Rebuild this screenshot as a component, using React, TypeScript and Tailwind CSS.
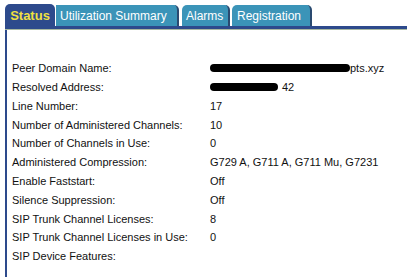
const rows: [string, string][] = [
  ["Peer Domain Name:", "domain"],
  ["Resolved Address:", "address"],
  ["Line Number:", "17"],
  ["Number of Administered Channels:", "10"],
  ["Number of Channels in Use:", "0"],
  ["Administered Compression:", "G729 A, G711 A, G711 Mu, G7231"],
  ["Enable Faststart:", "Off"],
  ["Silence Suppression:", "Off"],
  ["SIP Trunk Channel Licenses:", "8"],
  ["SIP Trunk Channel Licenses in Use:", "0"],
  ["SIP Device Features:", ""],
];

function Value({ v }: { v: string }) {
  if (v === "domain") {
    return (
      <span className="flex items-center">
        <span className="h-[8px] w-[140px] rounded-full bg-black" />
        <span>pts.xyz</span>
      </span>
    );
  }
  if (v === "address") {
    return (
      <span className="flex items-center">
        <span className="h-[8px] w-[68px] rounded-full bg-black" />
        <span className="ml-[4px]">42</span>
      </span>
    );
  }
  return <span>{v}</span>;
}

export default function App() {
  return (
    <div
      className="h-[277px] w-[407px] overflow-hidden bg-white text-[#111]"
      style={{ fontFamily: "Tahoma, 'Liberation Sans', sans-serif" }}
    >
      <div className="flex items-end pl-[5px] pt-[4px] text-[12px] leading-none">
        <div className="flex h-[22px] w-[50px] items-center justify-center rounded-t-[5px] bg-[#2d4a8c] text-[13px] font-bold text-[#f0e040]">
          Status
        </div>
        <div className="ml-[1px] flex h-[21px] w-[123px] items-center rounded-tr-[5px] border-r-2 border-[#2a4a70] bg-[#3b94b8] pl-[4px] text-white">
          Utilization Summary
        </div>
        <div className="ml-[3px] flex h-[21px] w-[48px] items-center rounded-t-[5px] border-r-2 border-[#2a4a70] bg-[#3b94b8] pl-[4px] text-white">
          Alarms
        </div>
        <div className="ml-[2px] flex h-[21px] w-[80px] items-center rounded-t-[5px] border-r-2 border-[#2a4a70] bg-[#3b94b8] pl-[5px] text-white">
          Registration
        </div>
      </div>
      <div className="ml-[5px] h-[3px] bg-[#2d4a8c]" />
      <div className="ml-[5px] h-[1px] bg-[#a8b8a0]" />
      <div className="ml-[5px] border-l-2 border-[#2d4a8c] pl-[5px] pt-[29px] text-[11px]">
        {rows.map(([k, v]) => (
          <div key={k} className="flex h-[18.8px] items-center">
            <div className="w-[198px]">{k}</div>
            <Value v={v} />
          </div>
        ))}
        <div className="h-[40px]" />
      </div>
    </div>
  );
}
